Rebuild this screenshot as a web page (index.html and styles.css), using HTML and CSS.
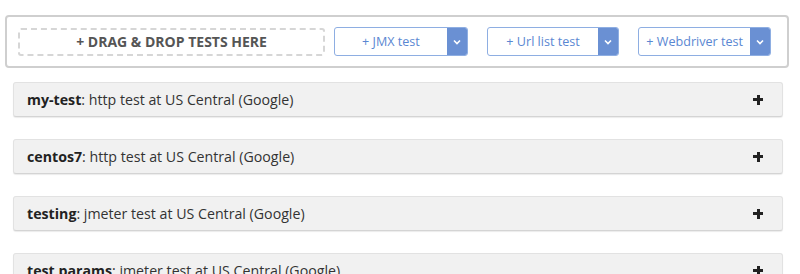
FILE: index.html
```html
<!DOCTYPE html>
<html lang="en">
<head>
  <meta charset="UTF-8" />
  <meta name="viewport" content="width=device-width, initial-scale=1.0"/>
  <title>Tests</title>
  <link rel="stylesheet" href="styles.css">
</head>
<body>
  <!-- Toolbar -->
  <div class="toolbar">
    <div class="drop-zone">+ DRAG &amp; DROP TESTS HERE</div>
    <div class="split-btn split-jmx">
      <span class="split-main">+ JMX test</span>
      <span class="split-caret">
        <svg width="8" height="6" viewBox="0 0 8 6"><path d="M1 1.5 L4 4.5 L7 1.5" fill="none" stroke="#fff" stroke-width="1.6"/></svg>
      </span>
    </div>
    <div class="split-btn">
      <span class="split-main">+ Url list test</span>
      <span class="split-caret">
        <svg width="8" height="6" viewBox="0 0 8 6"><path d="M1 1.5 L4 4.5 L7 1.5" fill="none" stroke="#fff" stroke-width="1.6"/></svg>
      </span>
    </div>
    <div class="split-btn">
      <span class="split-main">+ Webdriver test</span>
      <span class="split-caret">
        <svg width="8" height="6" viewBox="0 0 8 6"><path d="M1 1.5 L4 4.5 L7 1.5" fill="none" stroke="#fff" stroke-width="1.6"/></svg>
      </span>
    </div>
  </div>

  <!-- Test list -->
  <div class="test-list">
    <div class="test-row">
      <span><b>my-test</b>: http test at US Central (Google)</span>
      <span class="plus"></span>
    </div>
    <div class="test-row">
      <span><b>centos7</b>: http test at US Central (Google)</span>
      <span class="plus"></span>
    </div>
    <div class="test-row">
      <span><b>testing</b>: jmeter test at US Central (Google)</span>
      <span class="plus"></span>
    </div>
    <div class="test-row">
      <span><b>test params</b>: jmeter test at US Central (Google)</span>
      <span class="plus"></span>
    </div>
  </div>
</body>
</html>
```

FILE: styles.css
```css
body {
  margin: 0;
  padding: 0;
  background-color: white;
  font-family: "Open Sans", Arial, sans-serif;
  color: #333;
  overflow: hidden;
}

.toolbar {
  display: flex;
  align-items: center;
  margin: 15px 11px 0 5px;
  height: 53px;
  box-sizing: border-box;
  padding: 0 16px 0 11px;
  border: 2px solid #cfcfcf;
  border-radius: 4px;
}

.drop-zone {
  width: 308px;
  height: 28px;
  box-sizing: border-box;
  margin-right: 9px;
  border: 2px dashed #d6d6d6;
  border-radius: 3px;
  display: flex;
  align-items: center;
  justify-content: center;
  font-size: 14px;
  font-weight: 700;
  color: #555;
}

.split-btn {
  display: flex;
  width: 133px;
  height: 29px;
  box-sizing: border-box;
  border: 1px solid #8eaee2;
  border-radius: 3px;
  overflow: hidden;
  margin-left: 19px;
}

.split-jmx {
  width: 134px;
  margin-left: 0;
}

.split-main {
  flex: 1;
  display: flex;
  align-items: center;
  justify-content: center;
  font-size: 12.6px;
  color: #5a87d2;
  white-space: nowrap;
}

.split-caret {
  width: 20px;
  background-color: #6a90d3;
  display: flex;
  align-items: center;
  justify-content: center;
}

.test-list {
  margin: 14px 17px 0 13px;
  display: flex;
  flex-direction: column;
  gap: 22px;
}

.test-row {
  height: 35px;
  box-sizing: border-box;
  background-color: #f1f1f1;
  border: 1px solid #e2e2e2;
  border-bottom-color: #d4d4d4;
  border-radius: 3px;
  box-shadow: 0 1px 1px rgba(0, 0, 0, 0.08);
  display: flex;
  align-items: center;
  justify-content: space-between;
  padding: 0 19px 0 13px;
  font-size: 14.2px;
  color: #333;
}

.test-row b {
  color: #222;
}

.plus {
  position: relative;
  width: 10px;
  height: 10px;
}

.plus::before,
.plus::after {
  content: "";
  position: absolute;
  background-color: #222;
}

.plus::before {
  left: 0;
  top: 3.5px;
  width: 10px;
  height: 3px;
}

.plus::after {
  left: 3.5px;
  top: 0;
  width: 3px;
  height: 10px;
}
```
